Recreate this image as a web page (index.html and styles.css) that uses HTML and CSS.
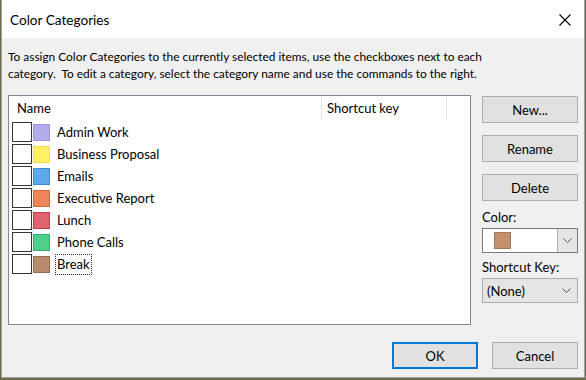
FILE: index.html
```html
<!DOCTYPE html>
<html>
<head>
<meta charset="utf-8">
<link rel="stylesheet" href="styles.css">
</head>
<body>
<div class="dialog">
  <div class="titlebar">
    <span class="title">Color Categories</span>
    <svg class="close" width="12" height="12" viewBox="0 0 12 12"><path d="M0.5 0.5 L11.5 11.5 M11.5 0.5 L0.5 11.5" stroke="#000" stroke-width="1.1" fill="none"/></svg>
  </div>
  <div class="content">
    <p class="desc">To assign Color Categories to the currently selected items, use the checkboxes next to each<br>category.&nbsp; To edit a category, select the category name and use the commands to the right.</p>
    <div class="main">
      <div class="list">
        <div class="header">
          <div class="col-name">Name</div>
          <div class="col-key">Shortcut key</div>
          <div class="col-rest"></div>
        </div>
        <div class="rows">
          <div class="row"><span class="check"></span><span class="swatch sw-admin"></span><span class="label">Admin Work</span></div>
          <div class="row"><span class="check"></span><span class="swatch sw-business"></span><span class="label">Business Proposal</span></div>
          <div class="row"><span class="check"></span><span class="swatch sw-emails"></span><span class="label">Emails</span></div>
          <div class="row"><span class="check"></span><span class="swatch sw-exec"></span><span class="label">Executive Report</span></div>
          <div class="row"><span class="check"></span><span class="swatch sw-lunch"></span><span class="label">Lunch</span></div>
          <div class="row"><span class="check"></span><span class="swatch sw-phone"></span><span class="label">Phone Calls</span></div>
          <div class="row"><span class="check"></span><span class="swatch sw-break"></span><span class="label focus">Break</span></div>
        </div>
      </div>
      <div class="side">
        <div class="btn">New...</div>
        <div class="btn">Rename</div>
        <div class="btn">Delete</div>
        <div class="field-label first">Color:</div>
        <div class="combo color-combo">
          <span class="combo-value"><span class="swatch sw-combo"></span></span>
          <span class="drop"><svg width="9" height="5" viewBox="0 0 9 5"><path d="M0.5 0.5 L4.5 4.5 L8.5 0.5" stroke="#555" fill="none"/></svg></span>
        </div>
        <div class="field-label">Shortcut Key:</div>
        <div class="combo key-combo">
          <span class="combo-text">(None)</span>
          <svg width="9" height="5" viewBox="0 0 9 5"><path d="M0.5 0.5 L4.5 4.5 L8.5 0.5" stroke="#555" fill="none"/></svg>
        </div>
      </div>
    </div>
    <div class="footer">
      <div class="btn btn-default">OK</div>
      <div class="btn">Cancel</div>
    </div>
  </div>
</div>
</body>
</html>
```
FILE: styles.css
```css
html, body {
  margin: 0;
  padding: 0;
}
body {
  width: 586px;
  height: 380px;
  background: #6d6b4c;
  font-family: "Lato", "Open Sans", sans-serif;
  font-size: 13px;
  color: #000;
  overflow: hidden;
}
.dialog {
  box-sizing: border-box;
  margin-left: 1px;
  width: 584px;
  height: 378px;
  background: #f0f0f0;
  border: 1px solid #a0a0a0;
  border-top: 0;
  display: flex;
  flex-direction: column;
}
.titlebar {
  height: 38px;
  background: #fff;
  display: flex;
  align-items: center;
  justify-content: space-between;
  padding: 0 13px 0 8px;
  flex: none;
}
.title {
  font-size: 13.6px;
  padding-top: 1px;
}
.close {
  display: block;
  margin-top: 1px;
}
.content {
  padding: 0 6px 0 6px;
  display: flex;
  flex-direction: column;
}
.desc {
  margin: 10px 0 13px 0;
  font-size: 11.9px;
  line-height: 17px;
  white-space: nowrap;
}
.main {
  display: flex;
  gap: 11px;
}
.list {
  box-sizing: border-box;
  width: 463px;
  height: 230px;
  background: #fff;
  border: 1px solid #828790;
}
.header {
  display: flex;
  height: 24px;
  align-items: stretch;
}
.header > div {
  display: flex;
  align-items: center;
  box-sizing: border-box;
}
.col-name {
  width: 313px;
  padding-left: 8px;
  border-right: 1px solid #e5e5e5;
}
.col-key {
  width: 125px;
  padding-left: 5px;
  border-right: 1px solid #e5e5e5;
}
.col-rest {
  flex: 1;
}
.rows {
  padding-top: 1px;
  display: flex;
  flex-direction: column;
}
.row {
  height: 22px;
  display: flex;
  align-items: center;
  padding-left: 3px;
}
.check {
  box-sizing: border-box;
  width: 20px;
  height: 20px;
  border: 1px solid #333;
  background: #fff;
  flex: none;
}
.swatch {
  box-sizing: border-box;
  width: 17px;
  height: 17px;
  border: 1px solid;
  flex: none;
  display: block;
}
.row .swatch {
  margin-left: 1px;
}
.label {
  margin-left: 5px;
  border: 1px solid transparent;
  padding: 0 1px;
  line-height: 19px;
}
.label.focus {
  border: 1px dotted #333;
}
.sw-admin { background: #b3aceb; border-color: #9f94e0; }
.sw-business { background: #fff066; border-color: #f2dc48; }
.sw-emails { background: #5ea9e9; border-color: #3a8bd9; }
.sw-exec { background: #ec8559; border-color: #d8643a; }
.sw-lunch { background: #e0646f; border-color: #c93d4a; }
.sw-phone { background: #4fce8b; border-color: #2fb36c; }
.sw-break { background: #b98a6b; border-color: #9b6c4e; }
.sw-combo { background: #c3916f; border-color: #a7775a; }

.side {
  width: 96px;
  padding-top: 1px;
  display: flex;
  flex-direction: column;
}
.btn {
  box-sizing: border-box;
  height: 27px;
  background: #e1e1e1;
  border: 1px solid #adadad;
  display: flex;
  align-items: center;
  justify-content: center;
  margin-bottom: 12px;
}
.side .btn:nth-child(3) {
  margin-bottom: 0;
}
.field-label {
  line-height: 17px;
  margin: 6px 0 2px 0;
}
.field-label.first {
  margin-top: 8px;
}
.combo {
  box-sizing: border-box;
  height: 25px;
  display: flex;
  align-items: center;
}
.color-combo {
  background: #fff;
  border: 1px solid #7a7a7a;
  align-items: stretch;
}
.combo-value {
  flex: 1;
  display: flex;
  align-items: center;
  padding-left: 11px;
}
.drop {
  box-sizing: border-box;
  width: 20px;
  background: #e5e5e5;
  border-left: 1px solid #adadad;
  display: flex;
  align-items: center;
  justify-content: center;
}
.key-combo {
  background: #e5e5e5;
  border: 1px solid #acacac;
  justify-content: space-between;
  padding: 0 6px 0 4px;
}
.footer {
  display: flex;
  justify-content: flex-end;
  gap: 14px;
  margin-top: 17px;
}
.footer .btn {
  width: 86px;
  height: 27px;
  margin: 0;
}
.btn-default {
  border: 2px solid #0078d7;
}
```
